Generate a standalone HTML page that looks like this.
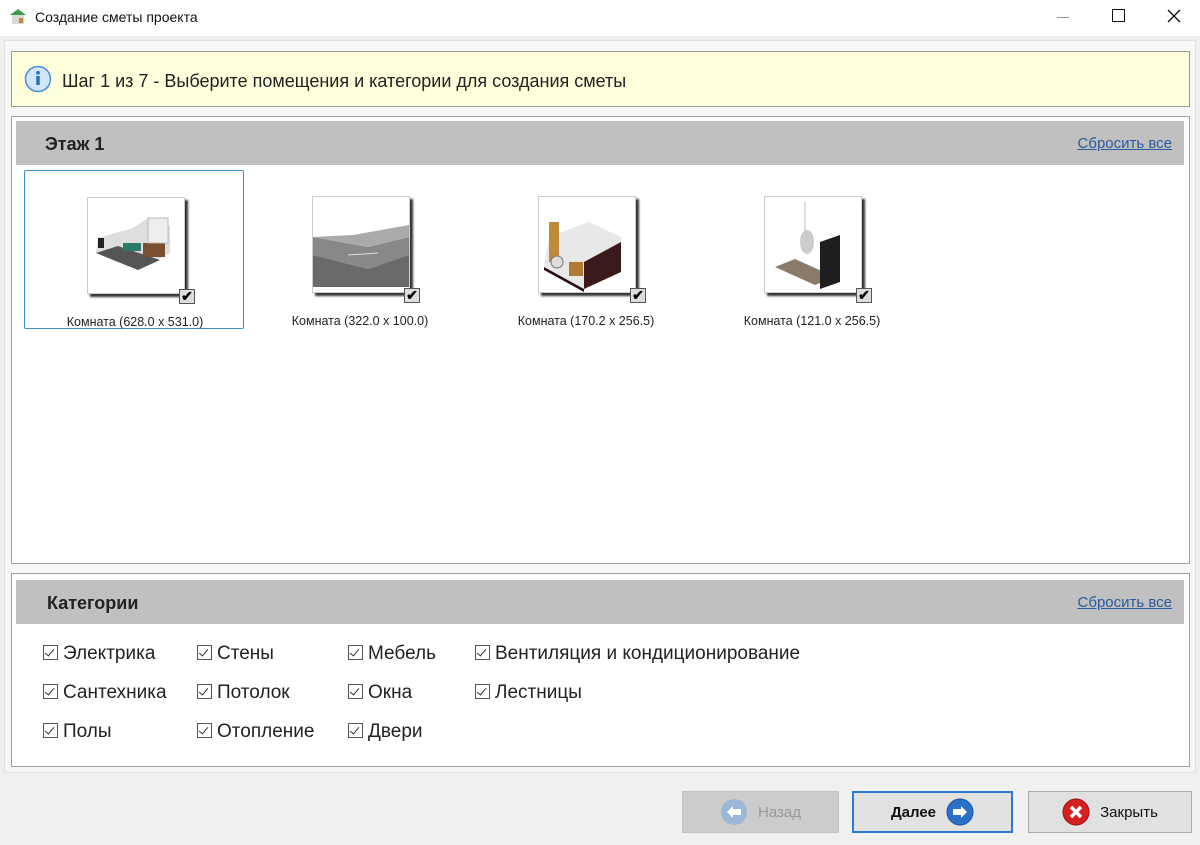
<!DOCTYPE html>
<html><head><meta charset="utf-8"><style>
*{margin:0;padding:0;box-sizing:border-box}
body{width:1200px;height:845px;background:#f0f0f0;font-family:"Liberation Sans",sans-serif;position:relative;overflow:hidden;color:#000}
.abs{position:absolute}
.title{left:0;top:0;width:1200px;height:36px;background:#fff}
.panel{background:#fff;border:1px solid #a0a0a0}
.hdr{background:#c0c0c0}
.hdr b{position:absolute;font-size:18px;color:#222}
.reset{position:absolute;right:12px;font-size:15px;color:#2a5b9b;text-decoration:underline}
.card{position:absolute;width:220px;height:159px}
.thumb{position:absolute;left:62px;top:26px;width:98px;height:97px;background:#fff;border:1px solid #ccc;box-shadow:3px 3px 2px #333}
.chk{position:absolute;left:154px;top:118px;width:16px;height:15px;background:#ddd;border:1px solid #555;font-size:14px;line-height:13px;text-align:center;font-weight:bold}
.lbl{position:absolute;left:0;width:220px;top:144px;text-align:center;font-size:12.5px;color:#222}
.cat{position:absolute;font-size:19px;color:#222;white-space:nowrap}
.cat i{display:inline-block;width:15px;height:15px;border:1px solid #555;margin-right:5px;vertical-align:-1px;position:relative;font-style:normal}
.cat i:after{content:"";position:absolute;left:3px;top:1px;width:4px;height:8px;border:solid #333;border-width:0 1.5px 1.5px 0;transform:rotate(40deg)}
.btn{position:absolute;top:791px;height:42px;border:1px solid #adadad;background:#e1e1e1;font-size:15px;display:flex;align-items:center;justify-content:center;gap:10px}
</style></head><body>
<div class="abs title">
 <svg class="abs" style="left:9px;top:8px" width="18" height="18"><path d="M1 7 L9 1 L17 7Z" fill="#3a9a4a"/><rect x="3" y="7" width="12" height="9" fill="#d8d8d8"/><rect x="10" y="10" width="4" height="5" fill="#d08030"/></svg>
 <div class="abs" style="left:35px;top:9px;font-size:14px;color:#111">Создание сметы проекта</div>
 <div class="abs" style="left:1057px;top:17px;width:12px;height:1px;background:#999"></div>
 <div class="abs" style="left:1112px;top:9px;width:13px;height:13px;border:1.5px solid #111"></div>
 <svg class="abs" style="left:1167px;top:9px" width="14" height="14"><path d="M1 1L13 13M13 1L1 13" stroke="#111" stroke-width="1.3"/></svg>
</div>
<div class="abs" style="left:4px;top:40px;width:1192px;height:733px;background:#f7f7f7;border:1px solid #e0e0e0"></div>
<div class="abs" style="left:11px;top:51px;width:1179px;height:56px;background:#ffffdc;border:1px solid #999"></div>
<svg class="abs" style="left:24px;top:65px" width="28" height="28"><circle cx="14" cy="14" r="12.5" fill="#cfe6fb" stroke="#4a8fd8" stroke-width="1.5"/><rect x="12.3" y="11" width="3.4" height="9" fill="#2a6cc0"/><circle cx="14" cy="7.8" r="1.9" fill="#2a6cc0"/></svg>
<div class="abs" style="left:62px;top:71px;font-size:18px;color:#222">Шаг 1 из 7 - Выберите помещения и категории для создания сметы</div>

<div class="abs panel" style="left:11px;top:116px;width:1179px;height:448px"></div>
<div class="abs hdr" style="left:16px;top:121px;width:1168px;height:44px"><b style="left:29px;top:13px">Этаж 1</b><span class="reset" style="top:14px">Сбросить все</span></div>

<div class="card" style="left:24px;top:170px;border:1.5px solid #3c8dc5;border-radius:2px">
 <div class="thumb"><svg width="96" height="95"><path d="M8 55 L50 72 L82 55 L82 28 L60 20 L45 30 L10 40Z" fill="#ddd"/><path d="M8 55 L50 72 L72 62 L30 48Z" fill="#555"/><rect x="35" y="45" width="18" height="8" fill="#2e7a6a"/><rect x="55" y="45" width="22" height="14" fill="#7a5030"/><rect x="10" y="40" width="6" height="10" fill="#222"/><rect x="60" y="20" width="20" height="25" fill="#eee" stroke="#bbb"/></svg></div>
 <div class="chk">✔</div><div class="lbl">Комната (628.0 x 531.0)</div></div>
<div class="card" style="left:250px;top:170px">
 <div class="thumb"><svg width="96" height="95"><path d="M0 58 L55 72 L96 58 L96 40 L55 50 L0 40Z" fill="#888"/><path d="M0 58 L55 72 L96 58 L96 90 L0 90Z" fill="#6a6a6a"/><path d="M0 40 L55 50 L96 40 L96 28 L40 38Z" fill="#aaa"/><line x1="35" y1="58" x2="65" y2="56" stroke="#ddd"/></svg></div>
 <div class="chk">✔</div><div class="lbl">Комната (322.0 x 100.0)</div></div>
<div class="card" style="left:476px;top:170px">
 <div class="thumb"><svg width="96" height="95"><path d="M5 70 L45 92 L82 75 L82 40 L50 25 L10 40Z" fill="#e8e8e8"/><path d="M45 65 L45 92 L82 75 L82 45Z" fill="#3a1a1a"/><rect x="10" y="25" width="10" height="40" fill="#c08a3a"/><circle cx="18" cy="65" r="6" fill="#ddd" stroke="#777"/><rect x="30" y="65" width="14" height="14" fill="#b07a30"/><path d="M5 70 L45 92 L45 95 L5 73Z" fill="#2a1010"/></svg></div>
 <div class="chk">✔</div><div class="lbl">Комната (170.2 x 256.5)</div></div>
<div class="card" style="left:702px;top:170px">
 <div class="thumb"><svg width="96" height="95"><path d="M10 70 L50 88 L70 80 L30 62Z" fill="#8a7a6a"/><ellipse cx="42" cy="45" rx="7" ry="12" fill="#ccc"/><path d="M55 45 L75 38 L75 85 L55 92Z" fill="#1e1e1e"/><line x1="40" y1="5" x2="40" y2="35" stroke="#bbb"/></svg></div>
 <div class="chk">✔</div><div class="lbl">Комната (121.0 x 256.5)</div></div>

<div class="abs panel" style="left:11px;top:573px;width:1179px;height:194px"></div>
<div class="abs hdr" style="left:16px;top:580px;width:1168px;height:44px"><b style="left:31px;top:13px">Категории</b><span class="reset" style="top:14px">Сбросить все</span></div>
<div class="cat" style="left:43px;top:643px"><i></i>Электрика</div>
<div class="cat" style="left:43px;top:682px"><i></i>Сантехника</div>
<div class="cat" style="left:43px;top:721px"><i></i>Полы</div>
<div class="cat" style="left:197px;top:643px"><i></i>Стены</div>
<div class="cat" style="left:197px;top:682px"><i></i>Потолок</div>
<div class="cat" style="left:197px;top:721px"><i></i>Отопление</div>
<div class="cat" style="left:348px;top:643px"><i></i>Мебель</div>
<div class="cat" style="left:348px;top:682px"><i></i>Окна</div>
<div class="cat" style="left:348px;top:721px"><i></i>Двери</div>
<div class="cat" style="left:475px;top:643px"><i></i>Вентиляция и кондиционирование</div>
<div class="cat" style="left:475px;top:682px"><i></i>Лестницы</div>

<div class="btn" style="left:682px;width:157px;background:#cccccc;border-color:#c4c4c4;color:#9a9a9a">
 <svg width="28" height="28"><circle cx="14" cy="14" r="13" fill="#9cb8d8"/><path d="M7 14 L13 8 L13 11 L21 11 L21 17 L13 17 L13 20Z" fill="#fff"/></svg><span>Назад</span></div>
<div class="btn" style="left:852px;width:161px;border:2px solid #2a7ad2;font-weight:bold;color:#111">
 <span>Далее</span><svg width="28" height="28"><circle cx="14" cy="14" r="13" fill="#2a72c8" stroke="#1a4f9a"/><path d="M21 14 L15 8 L15 11 L7 11 L7 17 L15 17 L15 20Z" fill="#fff"/></svg></div>
<div class="btn" style="left:1028px;width:164px;color:#111">
 <svg width="28" height="28"><circle cx="14" cy="14" r="13" fill="#d62020" stroke="#9a1010"/><path d="M9 9 L19 19 M19 9 L9 19" stroke="#fff" stroke-width="3.5"/></svg><span>Закрыть</span></div>
</body></html>
